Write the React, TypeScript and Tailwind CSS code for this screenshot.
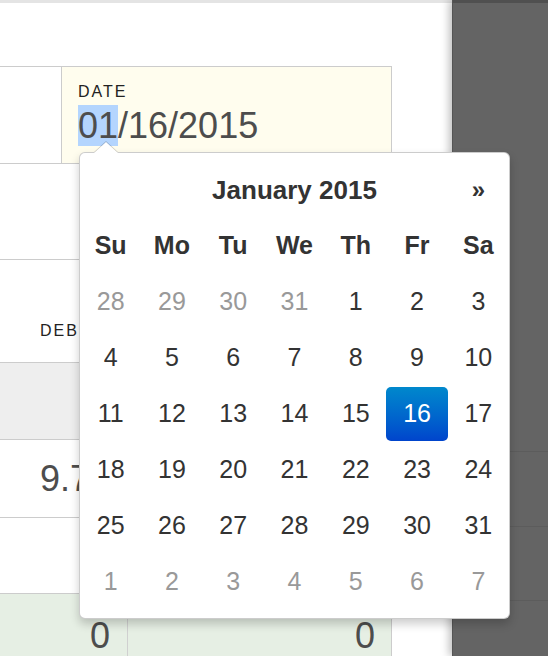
import React from "react";

type Day = { n: number; muted?: boolean; active?: boolean };

const weekDays = ["Su", "Mo", "Tu", "We", "Th", "Fr", "Sa"];

const buildWeeks = (): Day[][] => {
  const days: Day[] = [];
  [28, 29, 30, 31].forEach((n) => days.push({ n, muted: true }));
  for (let n = 1; n <= 31; n++) days.push({ n, active: n === 16 });
  for (let n = 1; n <= 7; n++) days.push({ n, muted: true });
  const weeks: Day[][] = [];
  for (let i = 0; i < days.length; i += 7) weeks.push(days.slice(i, i + 7));
  return weeks;
};

const DatePickerPopup = () => {
  const weeks = buildWeeks();
  return (
    <>
      <div className="absolute left-[93px] top-[141px] z-20 w-0 h-0 border-x-[13px] border-x-transparent border-b-[12px] border-b-[rgba(0,0,0,0.2)]" />
      <div className="absolute left-[94px] top-[142px] z-30 w-0 h-0 border-x-[12px] border-x-transparent border-b-[11px] border-b-white" />
      <div className="absolute left-[79px] top-[152px] z-20 w-[431px] h-[467px] bg-white border border-[rgba(0,0,0,0.2)] rounded-[6px] shadow-[0_5px_10px_rgba(0,0,0,0.2)] pt-[9px] text-[#333]">
        <div className="grid grid-cols-7 h-[56px] items-center text-center text-[26px] font-bold">
          <span />
          <span className="col-span-5">January 2015</span>
          <span className="text-[24px]">»</span>
        </div>
        <div className="grid grid-cols-7 h-[56px] items-center text-center text-[25px] font-bold">
          {weekDays.map((d) => (
            <span key={d}>{d}</span>
          ))}
        </div>
        {weeks.map((week, i) => (
          <div key={i} className="grid grid-cols-7 h-[56px] text-center text-[25px]">
            {week.map((d, j) =>
              d.active ? (
                <div key={j} className="py-[1px]">
                  <div className="h-full flex items-center justify-center rounded-[5px] bg-gradient-to-b from-[#0088cc] to-[#0044cc] text-white">
                    {d.n}
                  </div>
                </div>
              ) : (
                <div
                  key={j}
                  className={`flex items-center justify-center ${d.muted ? "text-[#999]" : "text-[#333]"}`}
                >
                  {d.n}
                </div>
              )
            )}
          </div>
        ))}
      </div>
    </>
  );
};

export default function App() {
  return (
    <div
      className="relative flex w-[548px] h-[656px] overflow-hidden bg-white"
      style={{ fontFamily: '"Liberation Sans", Arial, sans-serif' }}
    >
      <div className="w-[452px] shrink-0 flex flex-col">
        <div className="h-[3px] shrink-0 bg-[#e4e4e4]" />
        <div className="h-[63px] shrink-0" />
        <div className="w-[392px] shrink-0 border-t border-[#cccccc]">
          <div className="flex h-[97px] border-b border-[#cccccc]">
            <div className="w-[61px]" />
            <div className="flex-1 bg-[#fffdee] border-l border-r border-[#cccccc] pl-[16px] pt-[17px]">
              <div className="text-[16px] leading-[16px] tracking-[2px] text-[#222]">DATE</div>
              <div className="mt-[6px] text-[36px] leading-[40px] text-[#4d4d4d]">
                <span className="bg-[#b4d5fe]">01</span>/16/2015
              </div>
            </div>
          </div>
          <div className="h-[96px] border-b border-[#cccccc]" />
          <div className="h-[103px] border-b border-[#cccccc] pl-[40px] pt-[63px]">
            <div className="text-[16px] leading-[16px] tracking-[2px] text-[#222]">DEBIT</div>
          </div>
          <div className="h-[77px] border-b border-[#cccccc] bg-[#eeeeee]" />
          <div className="h-[78px] border-b border-[#cccccc] pl-[40px] pt-[19px]">
            <div className="text-[36px] leading-[40px] text-[#4d4d4d]">9.75</div>
          </div>
          <div className="h-[76px] border-b border-[#cccccc]" />
          <div className="flex h-[80px] bg-[#e6efe4] border-r border-[#cccccc] text-[36px] leading-[40px] text-[#4d4d4d]">
            <div className="w-[128px] border-r border-[#d0d0d0] text-right pr-[17px] pt-[22px]">0</div>
            <div className="flex-1 text-right pr-[16px] pt-[22px]">0</div>
          </div>
        </div>
      </div>
      <div className="relative z-10 flex-1 flex flex-col bg-[#646464] border-l border-[#555] shadow-[-3px_0_8px_rgba(0,0,0,0.25)]">
        <div className="h-[3px] shrink-0 bg-[#505050]" />
        <div className="h-[449px] shrink-0 border-b border-[#5c5c5c]" />
        <div className="h-[75px] shrink-0 border-b border-[#5c5c5c]" />
        <div className="h-[74px] shrink-0 border-b border-[#5c5c5c]" />
      </div>
      <DatePickerPopup />
    </div>
  );
}
